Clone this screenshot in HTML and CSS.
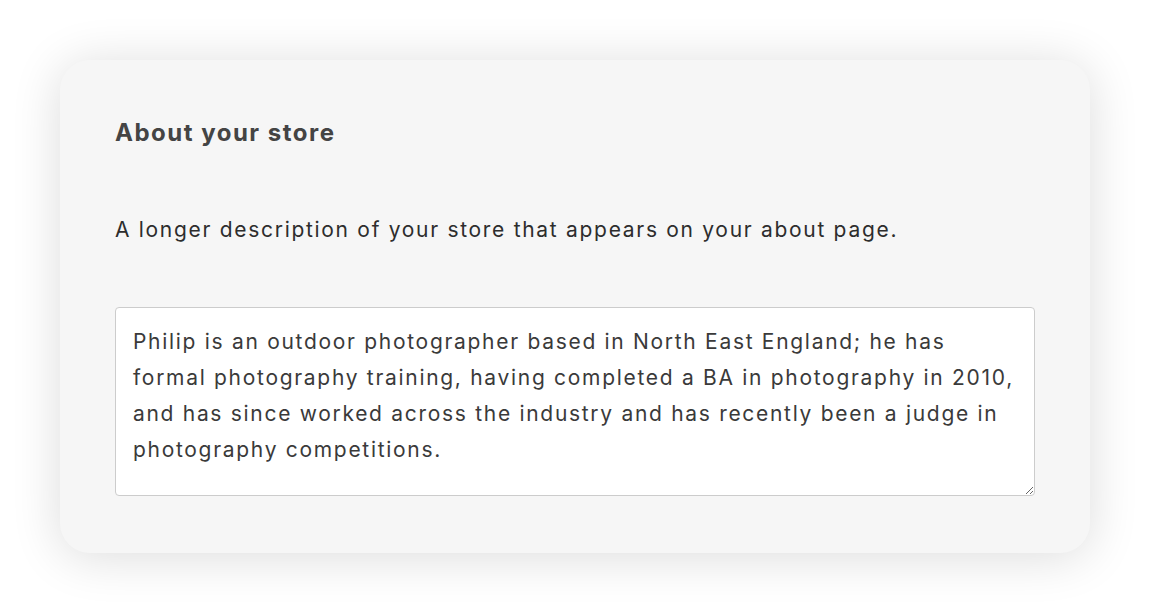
FILE: index.html
```html
<!DOCTYPE html>
<html>
  <head>
    <title>About your store</title>
    <link rel="stylesheet" href="styles.css">
  </head>
  <body>
    <section class="card">
      <h2 class="card-title">About your store</h2>
      <p class="card-hint">A longer description of your store that appears on your about page.</p>
      <textarea class="about-input" id="about">Philip is an outdoor photographer based in North East England; he has formal photography training, having completed a BA in photography in 2010, and has since worked across the industry and has recently been a judge in photography competitions.</textarea>
    </section>
  </body>
</html>
```

FILE: styles.css
```css
html,
body {
  margin: 0;
  background-color: #ffffff;
  font-family: Inter, "Open Sans", sans-serif;
}
body {
  padding: 60px;
}
.card {
  display: flex;
  flex-direction: column;
  width: 1030px;
  height: 493px;
  box-sizing: border-box;
  padding: 58px 55px 57px;
  background-color: #f6f6f6;
  border-radius: 30px;
  box-shadow: 0 4px 50px rgba(0, 0, 0, 0.14);
}
.card-title {
  margin: 0;
  font-size: 24px;
  line-height: 30px;
  font-weight: 700;
  letter-spacing: 1.5px;
  color: #444444;
}
.card-hint {
  margin: 67px 0 0;
  font-size: 21px;
  line-height: 30px;
  letter-spacing: 1.7px;
  color: #2d2d2d;
}
.about-input {
  margin-top: 62px;
  height: 189px;
  box-sizing: border-box;
  padding: 16px 17px;
  border: 1px solid #cccccc;
  border-radius: 4px;
  background-color: #ffffff;
  font-family: inherit;
  font-size: 21px;
  line-height: 36px;
  letter-spacing: 1.7px;
  color: #3a3a3a;
  outline: none;
}
```
